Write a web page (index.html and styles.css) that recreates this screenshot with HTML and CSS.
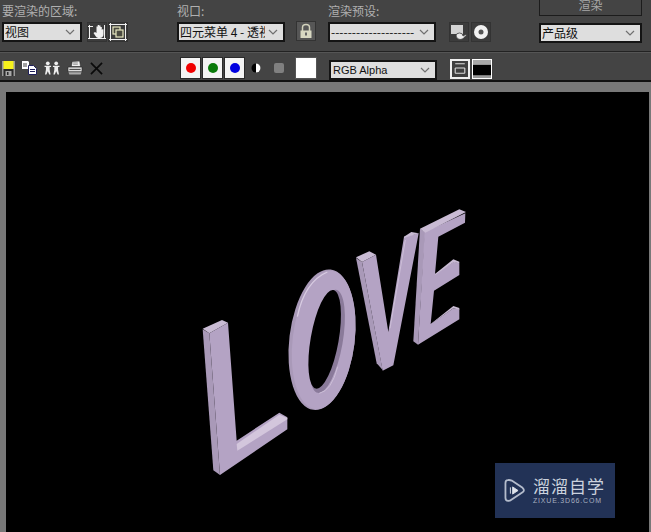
FILE: index.html
```html
<!DOCTYPE html>
<html lang="en">
<head>
    <meta charset="UTF-8">
    <meta name="viewport" content="width=device-width, initial-scale=1.0">
    <title>渲染帧窗口</title>
    <link rel="stylesheet" href="styles.css">
</head>
<body>
    <div class="top-bar">
        <div class="group group-area">
            <div class="label">要渲染的区域:</div>
            <div class="controls">
                <div class="combo combo-area"><span class="combo-text">视图</span><svg class="chevron" viewBox="0 0 10 6"><path d="M1 1l4 4 4-4"/></svg></div>
                <button class="tool tool-hand">
                    <svg viewBox="0 0 18 18"><path class="thin" d="M1.500 2v14M16.500 2v14M0 15.500h18M0 3.500h5"/><path class="fill-white" d="M7 9l1.500 1V3.500h1.200V8V2h1.400v6V2.500h1.400V8V4h1.300v3l1-1 .7.500V11q0 4-4 4h-1q-2 0-3-2l-2-3z"/></svg>
                </button>
                <button class="tool tool-region">
                    <svg viewBox="0 0 18 18"><path class="thin" d="M1.500 0v18M16.500 0v18M0 1.500h18M0 16.500h18"/><rect class="thin-dark" x="4" y="4" width="7" height="7"/><rect class="thin-dark" x="7" y="7" width="7" height="7"/></svg>
                </button>
            </div>
        </div>
        <div class="group group-view">
            <div class="label">视口:</div>
            <div class="controls">
                <div class="combo combo-view"><span class="combo-text">四元菜单 4 - 透视</span><svg class="chevron" viewBox="0 0 10 6"><path d="M1 1l4 4 4-4"/></svg></div>
                <button class="tool tool-lock">
                    <svg viewBox="0 0 18 18"><path class="lock-bow" d="M5.500 9V5.500q0-3 3.500-3t3.500 3V9"/><rect class="lock-body" x="3.500" y="8.500" width="11" height="7.500"/><rect class="lock-hole" x="8" y="10.500" width="2" height="3"/></svg>
                </button>
            </div>
        </div>
        <div class="group group-preset">
            <div class="label">渲染预设:</div>
            <div class="controls">
                <div class="combo combo-preset"><span class="combo-text">--------------------</span><svg class="chevron" viewBox="0 0 10 6"><path d="M1 1l4 4 4-4"/></svg></div>
                <button class="tool tool-teapot">
                    <svg viewBox="0 0 18 18"><rect class="fill-pale" x="1" y="2" width="12" height="9"/><path class="teapot" d="M6 13q0-3 3.500-3t3.500 3q2.500-2 4-1l-3 2.500q-1 2-4 2t-4-3.500z"/></svg>
                </button>
                <button class="tool tool-disc">
                    <svg viewBox="0 0 18 18"><circle class="fill-white" cx="9" cy="9" r="7"/><circle class="disc-hole" cx="9" cy="9" r="2.500"/></svg>
                </button>
            </div>
        </div>
        <div class="group group-render">
            <button class="render-btn">渲染</button>
            <div class="combo combo-render"><span class="combo-text">产品级</span><svg class="chevron" viewBox="0 0 10 6"><path d="M1 1l4 4 4-4"/></svg></div>
        </div>
    </div>

    <div class="second-bar">
        <div class="file-icons">
            <svg class="icon-save" viewBox="0 0 13 15"><rect width="13" height="15" fill="#9a9a9a"/><rect x="1.500" y="0" width="10" height="8" fill="#f6f21c"/><rect x="1.500" y="8" width="10" height="7" fill="#2c2c2c"/><rect x="3.500" y="10" width="6" height="5" fill="#a8a8a8"/><rect x="5" y="11" width="1.500" height="3" fill="#2c2c2c"/></svg>
            <svg class="icon-copy" viewBox="0 0 15 14"><path d="M0 0h6l1 1v7H0z" fill="#fff"/><path d="M1 3h4M1 5h4" stroke="#444"/><path d="M6.500 4.500h5l3 3v6h-8z" fill="#fff" stroke="#20205a"/><path d="M8 8.500h5M8 10.500h5" stroke="#20205a"/></svg>
            <svg class="icon-people" viewBox="0 0 17 15"><g fill="#eee"><circle cx="4" cy="2.500" r="2"/><path d="M0.500 5h7v1.500H6v3l1 5H5.500L4 11l-1.500 3.500H1l1-5v-3H0.500z"/><circle cx="13" cy="2.500" r="2"/><path d="M9.500 5h7v1.500H15v3l1 5h-1.500L13 11l-1.500 3.500H10l1-5v-3H9.500z"/></g></svg>
            <svg class="icon-print" viewBox="0 0 16 15"><path d="M5 .5l8-.5 1 6H4z" fill="#eee" stroke="#222" stroke-width="0.600"/><path d="M6 2h5M6 3.500h5" stroke="#555" stroke-width="0.600"/><path d="M.5 6.500h15v5H.5z" fill="#ddd" stroke="#222" stroke-width="0.600"/><path d="M1 12h14l-1 2.500H2z" fill="#aaa"/><path d="M2 9h12" stroke="#333"/></svg>
            <svg class="icon-clear" viewBox="0 0 14 14"><path d="M1 1l12 12M13 1L1 13" stroke="#0a0a0a" stroke-width="1.800"/></svg>
        </div>
        <div class="channels">
            <button class="channel"><span class="dot dot-red"></span></button>
            <button class="channel"><span class="dot dot-green"></span></button>
            <button class="channel"><span class="dot dot-blue"></span></button>
            <svg class="icon-half" viewBox="0 0 10 10"><circle cx="5" cy="5" r="4.500" fill="#000"/><path d="M5 .5a4.500 4.500 0 0 1 0 9z" fill="#fff"/></svg>
            <span class="gray-chip"></span>
            <span class="swatch"></span>
        </div>
        <div class="combo combo-channel"><span class="combo-text combo-latin">RGB Alpha</span><svg class="chevron" viewBox="0 0 10 6"><path d="M1 1l4 4 4-4"/></svg></div>
        <button class="view-btn view-btn-a"><svg viewBox="0 0 15 15"><path d="M3 2.500h9M3 6.500h9M3 11.500h9M3 6.500v5M12 6.500v5" stroke="#ddd" fill="none"/></svg></button>
        <button class="view-btn view-btn-b"><svg viewBox="0 0 15 15"><rect width="15" height="4" fill="#a8a8a8"/><rect y="4" width="15" height="9" fill="#000"/><rect y="13" width="15" height="2" fill="#999"/></svg></button>
    </div>

    <div class="viewport">
        <div class="canvas">
            <svg class="love" viewBox="0 0 900 870">
                <!-- L -->
                <path class="side" d="M68 388l20 12 32 425-20-14z"/>
                <path class="top" d="M68 386l58-26 18 8-56 32z"/>
                <path class="front" d="M88 400l56-32 26 354 128-84 24 14v36L120 825z"/>
                <path class="edge" d="M170 732l128-88 24 10v4L172 752z"/>
                <!-- O -->
                <ellipse class="side" cx="426" cy="419" rx="98" ry="212" transform="rotate(7 426 419)"/>
                <ellipse class="front" cx="431" cy="420" rx="93" ry="209" transform="rotate(7 431 420)"/>
                <path class="shine" d="M352 350q22-105 90-134"/>
                <ellipse class="inner" cx="441" cy="424" rx="47" ry="157" transform="rotate(10 441 424)"/>
                <ellipse class="hole" cx="434" cy="418" rx="42" ry="150" transform="rotate(10 434 418)"/>
                <path class="shine-thin" d="M473 500q-18 72-55 80"/>
                <!-- V -->
                <path class="side" d="M528 174l18 12 62 324-18-20z"/>
                <path class="top" d="M528 172l40-18 20 10-42 22z"/>
                <path class="front" d="M546 186l42-22 37 232 47-286 44-10-76 396-32 16z"/>
                <path class="top" d="M672 110l22-14 22 4-44 14z"/>
                <path class="shine-thin" d="M630 385l46-265"/>
                <!-- E -->
                <path class="side" d="M720 86l16 10-22 338-14-10z"/>
                <path class="front" d="M734 96l122-56-1 28-80 42-10 112 57-37 16 5v35l-76 47-10 100 68-47 18 3v30L714 434z"/>
                <path class="top" d="M720 86l118-58 20 8-122 62z"/>
                <path class="top" d="M765 222l55-44 18 7v5l-17-3-56 38z"/>
                <path class="top" d="M752 372l68-54 18 6v5l-18-4-68 48z"/>
            </svg>
            <div class="watermark">
                <svg class="wm-logo" viewBox="0 0 24 30"><path d="M5 3.500Q2.500 3.500 2.500 7v16q0 3.500 3 3.500 2 0 4-1.500l12-8q3-2 0-5l-12-8Q7 3 5 3.500z" fill="none" stroke="#b4bccc" stroke-width="2"/><path d="M8 11.500v7M10.500 11v8l6-4z" fill="#e0e4ec" stroke="#e0e4ec"/></svg>
                <div class="wm-text">
                    <div class="wm-name">溜溜自学</div>
                    <div class="wm-url">ZIXUE.3D66.COM</div>
                </div>
            </div>
        </div>
    </div>
</body>
</html>
```

FILE: styles.css
```css
* {
    box-sizing: border-box;
}

html, body {
    margin: 0;
    height: 100%;
}

body {
    width: 651px;
    height: 532px;
    overflow: hidden;
    background: #444444;
    font-family: "Noto Sans CJK SC", "Liberation Sans", sans-serif;
    font-size: 12px;
    display: flex;
    flex-direction: column;
}

button {
    padding: 0;
    border: none;
    font: inherit;
}

.top-bar {
    height: 52px;
    flex: none;
    display: flex;
    overflow: hidden;
    border-bottom: 1px solid #222222;
}

.group-area {
    margin-left: 2px;
    width: 175px;
}

.group-view {
    width: 151px;
}

.group-preset {
    width: 211px;
}

.label {
    height: 22px;
    line-height: 22px;
    color: #b0b0b0;
    font-size: 12px;
    white-space: nowrap;
}

.controls {
    display: flex;
    align-items: flex-start;
}

.combo {
    height: 20px;
    background: #dedede;
    border: 2px solid #141414;
    display: flex;
    align-items: center;
    color: #111111;
    padding-left: 1px;
    font-size: 12px;
    overflow: hidden;
}

.combo-text {
    flex: 1;
    white-space: nowrap;
    overflow: hidden;
    line-height: 16px;
}

.combo-latin {
    font-family: "Liberation Sans", sans-serif;
    font-size: 11px;
    padding-left: 1px;
}

.chevron {
    width: 10px;
    height: 6px;
    flex: none;
    margin: 0 5px 0 3px;
    fill: none;
    stroke: #707070;
    stroke-width: 1.200;
}

.combo-area {
    width: 80px;
}

.combo-view {
    width: 108px;
}

.combo-preset {
    width: 108px;
}

.combo-render {
    width: 103px;
    margin-top: 7px;
}

.tool {
    width: 20px;
    height: 20px;
    background: #3c3c3c;
    border: 1px solid #333333;
    display: block;
}

.tool svg {
    display: block;
    width: 18px;
    height: 18px;
}

.tool-hand {
    margin-left: 5px;
}

.tool-region {
    margin-left: 1px;
}

.tool-lock {
    margin-left: 11px;
    margin-top: -1px;
    background: #565656;
}

.tool-teapot {
    margin-left: 13px;
}

.tool-disc {
    margin-left: 2px;
}

.thin {
    fill: none;
    stroke: #f0f0f0;
    stroke-width: 1;
}

.thin-dark {
    fill: #4a4a40;
    stroke: #e8e8c0;
    stroke-width: 1.200;
}

.fill-white {
    fill: #f2f2f2;
}

.fill-pale {
    fill: #d4d4d4;
}

.teapot {
    fill: #ececec;
    stroke: #3c3c3c;
    stroke-width: 0.800;
}

.disc-hole {
    fill: #555555;
}

.lock-bow {
    fill: none;
    stroke: #d2d2bc;
    stroke-width: 1.500;
}

.lock-body {
    fill: #d8d8c2;
}

.lock-hole {
    fill: #666666;
}

.render-btn {
    display: block;
    width: 103px;
    height: 23px;
    margin-top: -7px;
    background: #444444;
    color: #a8a8a8;
    border: 1px solid #1c1c1c;
    font-size: 12px;
    line-height: 19px;
}

.second-bar {
    height: 30px;
    flex: none;
    display: flex;
    align-items: flex-start;
    border-top: 1px solid #555555;
    border-bottom: 2px solid #111111;
}

.file-icons {
    width: 180px;
    flex: none;
    height: 27px;
    padding-left: 2px;
    padding-top: 3px;
    display: flex;
    align-items: center;
    gap: 7px;
}

.icon-save {
    width: 13px;
    height: 15px;
}

.icon-copy {
    width: 15px;
    height: 14px;
}

.icon-people {
    width: 16px;
    height: 14px;
}

.icon-print {
    width: 16px;
    height: 14px;
}

.icon-clear {
    width: 13px;
    height: 13px;
}

.channels {
    width: 149px;
    flex: none;
    display: flex;
    align-items: center;
    margin-top: 4px;
}

.channel {
    width: 21px;
    height: 22px;
    margin-right: 1px;
    background: #f4f4f4;
    border: 1px solid #2a2a2a;
    display: flex;
    align-items: center;
    justify-content: center;
}

.dot {
    width: 10px;
    height: 10px;
    border-radius: 50%;
}

.dot-red {
    background: #f00000;
}

.dot-green {
    background: #0a7a0a;
}

.dot-blue {
    background: #0000e0;
}

.icon-half {
    width: 10px;
    height: 10px;
    margin-left: 5px;
}

.gray-chip {
    width: 10px;
    height: 10px;
    margin-left: 13px;
    background: #808080;
    border-radius: 2px;
}

.swatch {
    width: 22px;
    height: 22px;
    margin-left: 11px;
    background: #ffffff;
    border: 1px solid #555555;
}

.combo-channel {
    width: 108px;
    margin-top: 7px;
}

.view-btn {
    width: 20px;
    height: 20px;
    margin-top: 6px;
    background: #ffffff;
    padding: 1px;
}

.view-btn svg {
    display: block;
    width: 18px;
    height: 18px;
}

.view-btn-a {
    margin-left: 13px;
    background: #f0f0f0;
    padding: 2px;
}

.view-btn-a svg {
    width: 16px;
    height: 16px;
    background: #404040;
}

.view-btn-b {
    margin-left: 2px;
}

.viewport {
    flex: 1;
    background: #787878;
    padding: 10px 2px 0 6px;
    min-height: 0;
}

.canvas {
    position: relative;
    height: 100%;
    background: #000000;
    overflow: hidden;
}

/* letters sit on a free canvas, so placed by offset */
.love {
    position: absolute;
    left: 174px;
    top: 108px;
    width: 300px;
    height: 290px;
    filter: blur(0.6px);
}

.front {
    fill: #b4a3c4;
}

.side {
    fill: #a999b8;
}

.top {
    fill: #c9bbd4;
}

.edge {
    fill: #d3c6dc;
}

.shine {
    fill: none;
    stroke: #d8cce2;
    stroke-width: 4;
}

.shine-thin {
    fill: none;
    stroke: #cdbfd8;
    stroke-width: 3;
}

.inner {
    fill: #8a7a9a;
}

.hole {
    fill: #000000;
}

.watermark {
    position: absolute;
    left: 489px;
    top: 371px;
    width: 120px;
    height: 55px;
    background: #223256;
    display: flex;
    align-items: center;
    padding-left: 8px;
}

.wm-logo {
    width: 22px;
    height: 27px;
    flex: none;
}

.wm-text {
    margin-left: 8px;
    color: #ccd2de;
}

.wm-name {
    font-size: 17px;
    line-height: 20px;
    letter-spacing: 1px;
    white-space: nowrap;
}

.wm-url {
    font-family: "Liberation Sans", sans-serif;
    font-size: 7px;
    line-height: 10px;
    letter-spacing: 0.800px;
    white-space: nowrap;
    color: #a8b0c0;
}
```
